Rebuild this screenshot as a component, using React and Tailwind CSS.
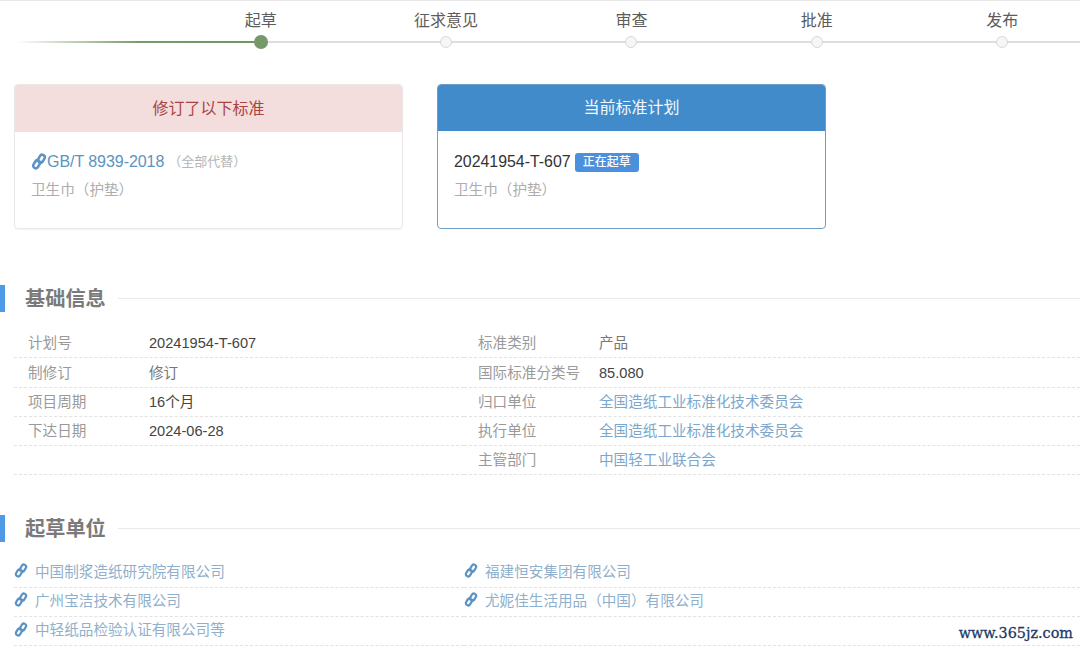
import React from "react";

const font = { fontFamily: '"Liberation Sans", "Noto Sans CJK SC", sans-serif' };

const steps = ["起草", "征求意见", "审查", "批准", "发布"];

const leftInfo = [
  ["计划号", "20241954-T-607"],
  ["制修订", "修订"],
  ["项目周期", "16个月"],
  ["下达日期", "2024-06-28"],
  ["", ""],
];

const rightInfo = [
  ["标准类别", "产品"],
  ["国际标准分类号", "85.080"],
  ["归口单位", "全国造纸工业标准化技术委员会", true],
  ["执行单位", "全国造纸工业标准化技术委员会", true],
  ["主管部门", "中国轻工业联合会", true],
];

const unitsLeft = ["中国制浆造纸研究院有限公司", "广州宝洁技术有限公司", "中轻纸品检验认证有限公司等"];
const unitsRight = ["福建恒安集团有限公司", "尤妮佳生活用品（中国）有限公司", ""];

// slanted chain link, the S shape in the reference
const LinkIcon = ({ className }) => (
  <svg viewBox="0 0 14 16" className={className} fill="none" stroke="currentColor" strokeWidth="2.4" strokeLinecap="round">
    <path d="M5.2 7.6 L7.9 2.9 C8.6 1.7 10 1.3 11.2 2 C12.4 2.7 12.8 4.1 12.1 5.3 L10.6 7.9 C9.9 9.1 8.5 9.5 7.3 8.8" />
    <path d="M8.8 8.4 L6.1 13.1 C5.4 14.3 4 14.7 2.8 14 C1.6 13.3 1.2 11.9 1.9 10.7 L3.4 8.1 C4.1 6.9 5.5 6.5 6.7 7.2" />
  </svg>
);

const SectionTitle = ({ title }) => (
  <div className="flex items-center h-[27px]">
    <div className="w-[5px] h-[27px] bg-[#4f9ae6]" />
    <h2 className="ml-5 text-[20.2px] leading-[27px] font-bold text-[#7a7a7a] translate-y-px">{title}</h2>
    <div className="ml-[12px] flex-1 h-px bg-[#eaeaea]" />
  </div>
);

const InfoRow = ({ row }) => {
  const isLatin = /^[\d]/.test(row[1]);
  return (
    <div className="flex h-[29.3px] items-center pl-[14px] pt-[2px] border-b border-dashed border-[#e2e2e2] text-[14.6px]">
      <span className="w-[121px] text-[#9a9a9a]">{row[0]}</span>
      <span className={row[2] ? "text-[#7ba7cc]" : isLatin ? "text-[#444444]" : "text-[#777777]"}>{row[1]}</span>
    </div>
  );
};

const UnitRow = ({ name }) => (
  <div className="flex h-[29.3px] items-center border-b border-dashed border-[#e2e2e2] text-[14.6px] text-[#8fb0cc]">
    {name && <LinkIcon className="w-[14px] h-[15px] text-[#5b93c4] mr-[7px] -translate-y-[2px]" />}
    <span>{name}</span>
  </div>
);

export default function App() {
  return (
    <div style={font} className="relative w-[1080px] h-[648px] overflow-hidden bg-white border-t border-[#e8e8e8]">
      {/* Steps */}
      <div className="relative h-[83px]">
        <div className="absolute left-[16px] right-0 top-[40px] h-[2px] bg-[#dddddd]" />
        <div className="absolute left-[16px] w-[245px] top-[40px] h-[2px] bg-gradient-to-r from-[#ffffff] via-[#7b9b6a] to-[#6f9464]" />
        <div className="relative flex pl-[168px] pt-[10px]">
          {steps.map((s, i) => (
            <div key={s} className="w-[185.4px] shrink-0 flex flex-col items-center">
              <span className="text-[16px] leading-[20px] text-[#5c5c5c]">{s}</span>
              <span className={i === 0
                ? "mt-[4px] w-[14px] h-[14px] rounded-full bg-[#76986a]"
                : "mt-[5px] w-[12px] h-[12px] rounded-full bg-[#f6f6f6] border border-[#d8d8d8]"} />
            </div>
          ))}
        </div>
      </div>

      {/* Cards */}
      <div className="flex gap-[34px] pl-[14px]">
        <div className="w-[389px] h-[145px] rounded-[4px] border border-[#ebe7e7] shadow-[0_1px_1px_rgba(0,0,0,0.05)] overflow-hidden">
          <div className="h-[47px] flex items-center justify-center bg-[#f3dddd] text-[16px] text-[#a94442]">修订了以下标准</div>
          <div className="pl-[16px] pt-[20px]">
            <div className="flex items-center h-[20px]">
              <LinkIcon className="w-[16px] h-[17px] text-[#5b93c4] -translate-y-px" />
              <span className="text-[16px] tracking-[-0.05px] text-[#5b93c0]">GB/T 8939-2018</span>
              <span className="ml-[4px] text-[13px] text-[#b5b5b5]">（全部代替）</span>
            </div>
            <div className="mt-[8px] text-[14.6px] leading-[20px] text-[#adadad]">卫生巾（护垫）</div>
          </div>
        </div>

        <div className="w-[389px] h-[145px] rounded-[4px] border border-[#6f9fc6] overflow-hidden">
          <div className="h-[46px] flex items-center justify-center bg-[#428bca] text-[16px] text-[#f2f7fb]">当前标准计划</div>
          <div className="pl-[16px] pt-[21px]">
            <div className="flex items-center h-[20px]">
              <span className="text-[15.9px] text-[#333333]">20241954-T-607</span>
              <span className="ml-[4px] h-[19px] px-[8px] rounded-[3px] bg-[#4a90dc] text-[12px] font-medium leading-[19px] text-white">正在起草</span>
            </div>
            <div className="mt-[8px] text-[14.6px] leading-[20px] text-[#adadad]">卫生巾（护垫）</div>
          </div>
        </div>
      </div>

      {/* 基础信息 */}
      <div className="mt-[56px]">
        <SectionTitle title="基础信息" />
      </div>
      <div className="mt-[17px] ml-[14px] grid grid-cols-[450px_1fr]">
        <div>{leftInfo.map((r, i) => <InfoRow key={i} row={r} />)}</div>
        <div>{rightInfo.map((r, i) => <InfoRow key={i} row={r} />)}</div>
      </div>

      {/* 起草单位 */}
      <div className="mt-[40px]">
        <SectionTitle title="起草单位" />
      </div>
      <div className="mt-[16px] ml-[14px] grid grid-cols-[450px_1fr]">
        <div>{unitsLeft.map((n) => <UnitRow key={n} name={n} />)}</div>
        <div>{unitsRight.map((n, i) => <UnitRow key={i} name={n} />)}</div>
      </div>

      {/* watermark */}
      <div className="absolute right-[7px] bottom-[6px] text-[14.4px] leading-[18px] text-[#1b3a68] [-webkit-text-stroke:0.3px_#1b3a68]" style={{ fontFamily: '"DejaVu Serif", serif' }}>www.365jz.com</div>
    </div>
  );
}
